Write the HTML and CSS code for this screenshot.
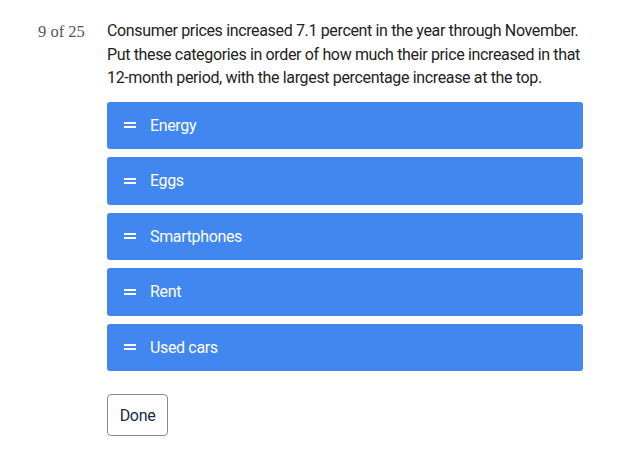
FILE: index.html
```html
<!DOCTYPE html>
<html lang="en">
<head>
    <meta charset="UTF-8">
    <title>Quiz - 9 of 25</title>
    <link rel="stylesheet" href="styles.css">
</head>
<body>
    <div class="question">
        <div class="question-num">9 of 25</div>
        <div class="question-body">
            <p class="prompt">Consumer prices increased 7.1 percent in the year through November. Put these categories in order of how much their price increased in that 12-month period, with the largest percentage increase at the top.</p>

            <ul class="sort-list">
                <li><span class="handle"></span>Energy</li>
                <li><span class="handle"></span>Eggs</li>
                <li><span class="handle"></span>Smartphones</li>
                <li><span class="handle"></span>Rent</li>
                <li><span class="handle"></span>Used cars</li>
            </ul>

            <button class="done">Done</button>
        </div>
    </div>
</body>
</html>
```

FILE: styles.css
```css
body {
    margin: 0;
    background-color: #fff;
    font-family: Roboto, "Liberation Sans", Arial, sans-serif;
    color: #121212;
}

.question {
    display: flex;
    padding: 19px 0 0 38px;
}

.question-num {
    width: 69px;
    flex-shrink: 0;
    font-family: "Liberation Serif", serif;
    font-size: 16.5px;
    color: #555;
    line-height: 25px;
}

.question-body {
    width: 476px;
}

.prompt {
    margin: 0 0 12px 0;
    font-size: 16px;
    line-height: 23.5px;
    letter-spacing: -0.35px;
    color: #222;
}

.sort-list {
    list-style-type: none;
    margin: 0;
    padding: 0;
}

.sort-list li {
    display: flex;
    align-items: center;
    height: 47.5px;
    margin-bottom: 8px;
    padding-left: 17px;
    background-color: #4187ef;
    border-radius: 3px;
    color: #fff;
    font-size: 16px;
    letter-spacing: -0.35px;
}

.handle {
    display: inline-block;
    width: 12px;
    height: 2px;
    margin-right: 14px;
    border-top: 2px solid #fff;
    border-bottom: 2px solid #fff;
}

.done {
    margin-top: 15px;
    width: 61px;
    height: 42px;
    padding: 0;
    background-color: #fff;
    border: 1px solid #8a8a8a;
    border-radius: 4px;
    font-family: Roboto, "Liberation Sans", Arial, sans-serif;
    font-size: 16px;
    letter-spacing: -0.35px;
    color: #1b2a47;
    cursor: pointer;
}
```
